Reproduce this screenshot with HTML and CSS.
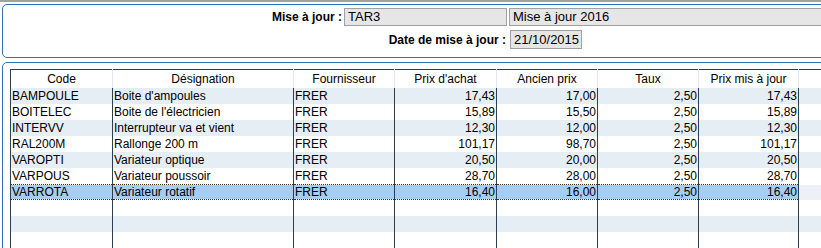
FILE: index.html
```html
<!DOCTYPE html>
<html lang="fr">
<head>
    <meta charset="UTF-8">
    <title>Mise à jour des tarifs</title>
    <link rel="stylesheet" href="styles.css">
</head>
<body>
    <div class="panel header-panel">
        <div class="form-row">
            <label class="lbl lbl-maj">Mise à jour :</label>
            <div class="field field-code">TAR3</div>
            <div class="field field-libelle">Mise à jour 2016</div>
        </div>
        <div class="form-row">
            <label class="lbl lbl-date">Date de mise à jour :</label>
            <div class="field field-date">21/10/2015</div>
        </div>
    </div>

    <div class="panel table-panel">
        <table class="grid">
            <colgroup>
                <col class="c-code">
                <col class="c-desig">
                <col class="c-fourn">
                <col class="c-num">
                <col class="c-num2">
                <col class="c-num2">
                <col class="c-last">
                <col>
            </colgroup>
            <thead>
                <tr>
                    <th>Code</th>
                    <th>Désignation</th>
                    <th>Fournisseur</th>
                    <th>Prix d'achat</th>
                    <th>Ancien prix</th>
                    <th>Taux</th>
                    <th>Prix mis à jour</th>
                    <th class="filler"></th>
                </tr>
            </thead>
            <tbody id="rows"></tbody>
        </table>
    </div>

    <script>
        const tarifs = [
            { code: "BAMPOULE", desig: "Boite d'ampoules", fourn: "FRER", achat: "17,43", ancien: "17,00", taux: "2,50", maj: "17,43" },
            { code: "BOITELEC", desig: "Boite de l'électricien", fourn: "FRER", achat: "15,89", ancien: "15,50", taux: "2,50", maj: "15,89" },
            { code: "INTERVV", desig: "Interrupteur va et vient", fourn: "FRER", achat: "12,30", ancien: "12,00", taux: "2,50", maj: "12,30" },
            { code: "RAL200M", desig: "Rallonge 200 m", fourn: "FRER", achat: "101,17", ancien: "98,70", taux: "2,50", maj: "101,17" },
            { code: "VAROPTI", desig: "Variateur optique", fourn: "FRER", achat: "20,50", ancien: "20,00", taux: "2,50", maj: "20,50" },
            { code: "VARPOUS", desig: "Variateur poussoir", fourn: "FRER", achat: "28,70", ancien: "28,00", taux: "2,50", maj: "28,70" },
            { code: "VARROTA", desig: "Variateur rotatif", fourn: "FRER", achat: "16,40", ancien: "16,00", taux: "2,50", maj: "16,40", selected: true }
        ];

        const body = document.getElementById("rows");
        tarifs.forEach(item => {
            body.innerHTML += `
                <tr class="${item.selected ? "selected" : ""}">
                    <td>${item.code}</td>
                    <td>${item.desig}</td>
                    <td>${item.fourn}</td>
                    <td class="num">${item.achat}</td>
                    <td class="num">${item.ancien}</td>
                    <td class="num">${item.taux}</td>
                    <td class="num">${item.maj}</td>
                    <td class="filler"></td>
                </tr>`;
        });
        // empty lines to fill the grid
        for (let i = 0; i < 4; i++) {
            body.innerHTML += `<tr><td></td><td></td><td></td><td></td><td></td><td></td><td></td><td class="filler"></td></tr>`;
        }
    </script>
</body>
</html>
```

FILE: styles.css
```css
body {
    margin: 0;
    font-family: "Liberation Sans", Arial, sans-serif;
    font-size: 12px;
    color: #000;
    background: #fff;
    border-top: 2px solid #a0a0a0;
    overflow: hidden;
}

.panel {
    border: 1px solid #2f72b4;
    border-radius: 5px;
    margin-left: 2px;
    margin-right: -20px;
    background: #fff;
}

/* Top form */
.header-panel {
    margin-top: 2px;
    height: 52px;
}
.form-row {
    display: flex;
    align-items: center;
}
.form-row:first-child {
    margin-top: 3px;
}
.form-row + .form-row {
    margin-top: 4px;
}
.lbl {
    font-weight: bold;
    text-align: right;
}
.lbl-maj {
    width: 339px;
    margin-right: 2px;
}
.lbl-date {
    width: 503px;
    margin-right: 4px;
}
.field {
    box-sizing: border-box;
    height: 18px;
    line-height: 16px;
    background: #e6e6e6;
    border: 1px solid #a0a0a0;
    padding: 0 3px;
    font-size: 13px;
}
.field-code {
    width: 163px;
    margin-right: 2px;
}
.field-libelle {
    flex: 1;
}
.field-date {
    width: 72px;
    height: 19px;
    line-height: 17px;
}

/* Table */
.table-panel {
    margin-top: 4px;
    padding: 6px 0 0 7px;
    height: 200px;
}
.grid {
    border-collapse: collapse;
    table-layout: fixed;
    width: 830px;
    border-top: 1px solid #2c3e50;
    border-left: 1px solid #2c3e50;
}
.c-code { width: 102px; }
.c-desig { width: 181px; }
.c-fourn { width: 101px; }
.c-num { width: 102px; }
.c-num2 { width: 101px; }
.c-last { width: 100px; }

.grid th {
    height: 18px;
    padding: 0;
    font-weight: normal;
    text-align: center;
    background: #fff;
    border-right: 1px solid #dfe8f2;
    white-space: nowrap;
}
.grid td {
    height: 15px;
    padding: 1px 1px 0;
    line-height: 15px;
    white-space: nowrap;
    overflow: hidden;
    border-right: 1px solid #2c3e50;
}
.grid td.num {
    text-align: right;
}
.grid tbody tr:nth-child(odd) td {
    background: #e5edf5;
}
.grid tbody tr:nth-child(even) td {
    background: #fff;
}
.grid th.filler {
    border-right: none;
}
.grid tbody td.filler {
    background: #eef0f8;
    border-right: none;
}

.grid tbody tr.selected td {
    background: #a6cdf2;
    border-top: 1px dotted #3a2a1a;
    border-bottom: 1px dotted #3a2a1a;
    height: 14px;
    padding-top: 0;
    line-height: 14px;
}
.grid tbody tr.selected td.filler {
    background: #eef0f8;
    border-top: none;
    border-bottom: none;
}
```
